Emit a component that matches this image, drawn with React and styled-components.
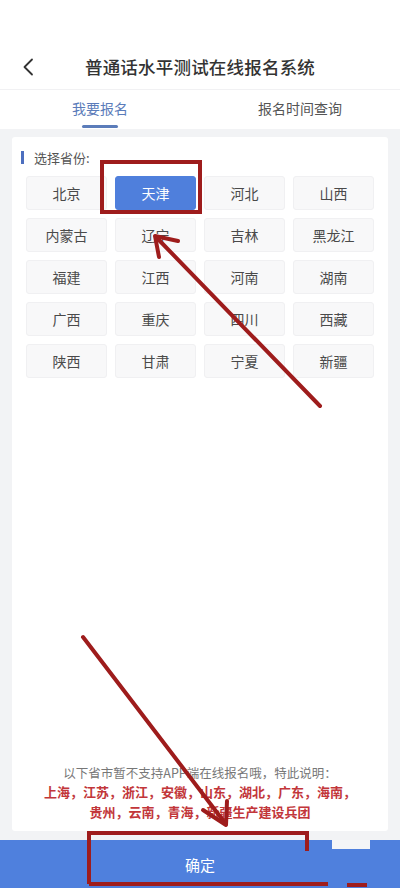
import styled, { createGlobalStyle } from "styled-components";

const provinces = [
  "北京", "天津", "河北", "山西",
  "内蒙古", "辽宁", "吉林", "黑龙江",
  "福建", "江西", "河南", "湖南",
  "广西", "重庆", "四川", "西藏",
  "陕西", "甘肃", "宁夏", "新疆",
];

const GlobalStyle = createGlobalStyle`
  * { box-sizing: border-box; }
  html, body { margin: 0; padding: 0; background: #ffffff; }
  body {
    font-family: "Noto Sans CJK SC", "Noto Sans", "Liberation Sans", sans-serif;
  }
`;

const Screen = styled.div`
  position: relative;
  width: 400px;
  height: 888px;
  display: flex;
  flex-direction: column;
  background: #ffffff;
  overflow: hidden;
`;

const StatusArea = styled.div`
  height: 44px;
  flex-shrink: 0;
`;

const Header = styled.header`
  height: 46px;
  flex-shrink: 0;
  display: flex;
  align-items: center;
  justify-content: center;
  position: relative;
  border-bottom: 1px solid #f1f1f3;
  h1 {
    margin: 0;
    font-size: 17.5px;
    font-weight: 500;
    color: #333;
    letter-spacing: 0.2px;
  }
`;

const BackButton = styled.div`
  position: absolute;
  left: 20px;
  top: 13px;
  width: 16px;
  height: 20px;
  display: flex;
  align-items: center;
  justify-content: center;
`;

const Tabs = styled.nav`
  height: 39px;
  flex-shrink: 0;
  display: flex;
`;

const Tab = styled.div`
  flex: 1;
  position: relative;
  display: flex;
  justify-content: center;
  padding-top: 8px;
  font-size: 14px;
  color: ${(p) => (p.$active ? "#5b7cba" : "#555")};
  &::after {
    content: "";
    display: ${(p) => (p.$active ? "block" : "none")};
    position: absolute;
    bottom: 1px;
    left: 50%;
    width: 36px;
    margin-left: -18px;
    height: 3px;
    border-radius: 2px;
    background: #5b7cba;
  }
`;

const Content = styled.main`
  flex: 1;
  background: #f2f3f5;
  padding: 8px 12px 9px;
  display: flex;
`;

const Card = styled.section`
  flex: 1;
  background: #ffffff;
  border-radius: 3px;
  padding: 12px 14px 10px;
  display: flex;
  flex-direction: column;
`;

const Label = styled.div`
  display: flex;
  align-items: center;
  gap: 10px;
  font-size: 13px;
  color: #555;
  height: 16px;
  &::before {
    content: "";
    width: 3px;
    height: 13px;
    margin-left: -5px;
    background: #4d6fbf;
  }
`;

const Grid = styled.div`
  margin-top: 11px;
  display: grid;
  grid-template-columns: repeat(4, 81px);
  column-gap: 8px;
  row-gap: 8px;
`;

const Cell = styled.div`
  height: 34px;
  display: flex;
  align-items: center;
  justify-content: center;
  font-size: 14px;
  border-radius: 3px;
  color: ${(p) => (p.$selected ? "#ffffff" : "#4a4a4a")};
  background: ${(p) => (p.$selected ? "#4f7fdc" : "#f8f8f9")};
  border: 1px solid ${(p) => (p.$selected ? "#4f7fdc" : "#f0f0f2")};
`;

const Notice = styled.div`
  margin-top: auto;
  text-align: center;
  font-size: 12.5px;
  line-height: 19.5px;
  color: #777;
  p {
    margin: 0;
  }
`;

const RedLine = styled.p`
  color: #c2363a;
  font-weight: 700;
  font-size: 13px;
`;

const ConfirmBar = styled.footer`
  height: 48px;
  flex-shrink: 0;
  background: #4f80dd;
  display: flex;
  align-items: center;
  justify-content: center;
  color: #ffffff;
  font-size: 15px;
`;

const Annotations = styled.svg`
  position: absolute;
  left: 0;
  top: 0;
  pointer-events: none;
`;

export default function App() {
  return (
    <Screen>
      <GlobalStyle />
      <StatusArea />
      <Header>
        <BackButton>
          <svg width="12" height="18" viewBox="0 0 12 18">
            <path d="M10 1.5 L2.5 9 L10 16.5" fill="none" stroke="#333" strokeWidth="1.8" strokeLinecap="round" strokeLinejoin="round" />
          </svg>
        </BackButton>
        <h1>普通话水平测试在线报名系统</h1>
      </Header>
      <Tabs>
        <Tab $active>我要报名</Tab>
        <Tab>报名时间查询</Tab>
      </Tabs>
      <Content>
        <Card>
          <Label>选择省份:</Label>
          <Grid>
            {provinces.map((p) => (
              <Cell key={p} $selected={p === "天津"}>{p}</Cell>
            ))}
          </Grid>
          <Notice>
            <p>以下省市暂不支持APP端在线报名哦，特此说明：</p>
            <RedLine>上海，江苏，浙江，安徽，山东，湖北，广东，海南，</RedLine>
            <RedLine>贵州，云南，青海，新疆生产建设兵团</RedLine>
          </Notice>
        </Card>
      </Content>
      <ConfirmBar>确定</ConfirmBar>

      <Annotations width="400" height="888" viewBox="0 0 400 888">
        <rect x="332" y="840" width="38" height="9" fill="#f4f5f7" />
        <g fill="none" stroke="#9e1c1c" strokeWidth="4" strokeLinecap="round" strokeLinejoin="round">
          <rect x="102" y="162" width="98" height="50" strokeLinecap="butt" strokeLinejoin="miter" />
          <line x1="320" y1="406" x2="156" y2="237" />
          <polyline points="178,241 155,236 159,257" />
          <line x1="83" y1="637" x2="225" y2="823" />
          <polyline points="203,810 226,825 227,801" />
          <path d="M89 884 L89 833 L307 833 L307 851" strokeLinecap="butt" strokeLinejoin="miter" />
          <line x1="89" y1="884" x2="328" y2="884" strokeLinecap="butt" />
          <line x1="347" y1="885" x2="367" y2="885" strokeLinecap="butt" />
        </g>
      </Annotations>
    </Screen>
  );
}
